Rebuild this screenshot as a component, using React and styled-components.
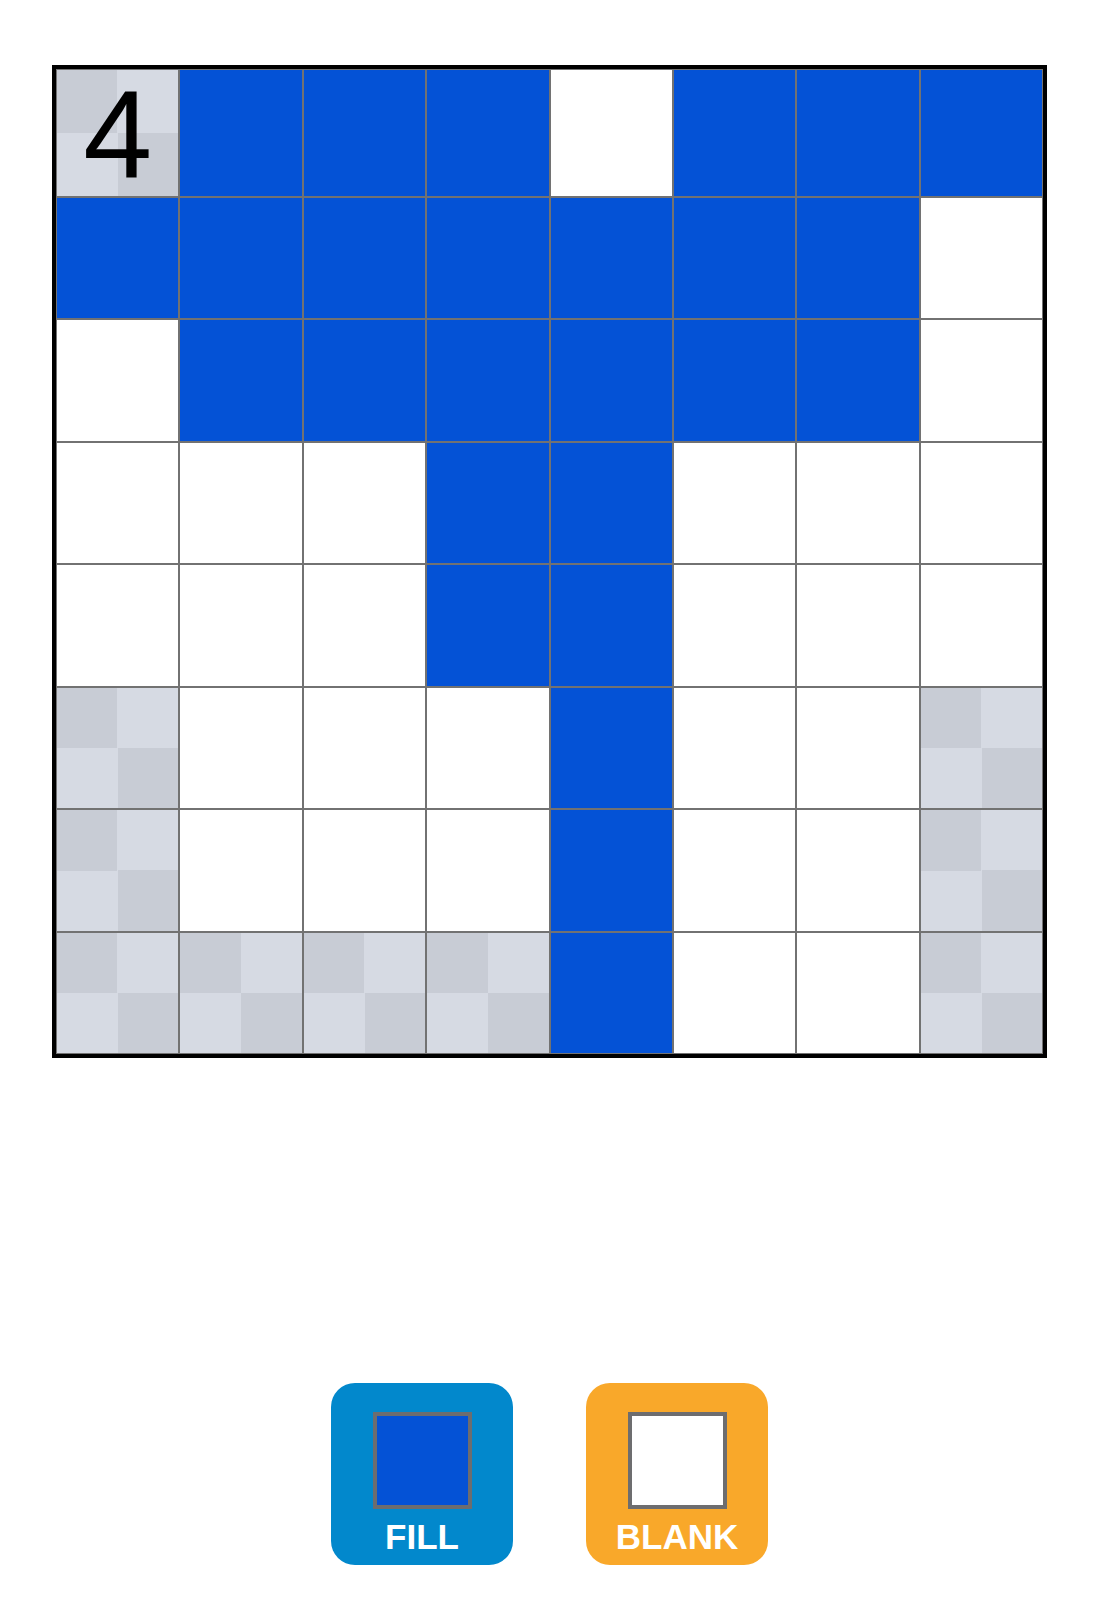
import React from "react";
import styled, { createGlobalStyle } from "styled-components";

const GlobalStyle = createGlobalStyle`
  html, body { margin: 0; padding: 0; background: #ffffff; }
  body { font-family: "Liberation Sans", Arial, sans-serif; }
  * { box-sizing: border-box; }
`;

const Page = styled.main`
  width: 1099px;
  min-height: 1600px;
  display: flex;
  flex-direction: column;
  align-items: center;
  padding-top: 65px;
`;

const Board = styled.div`
  width: 995px;
  height: 993px;
  border: 4px solid #000;
  display: grid;
  grid-template-columns: repeat(8, 1fr);
  grid-template-rows: repeat(8, 1fr);
  background: #fff;
`;

const COLORS = {
  B: "#0452d6",
  W: "#ffffff",
};

const Cell = styled.div`
  border: 1px solid #727272;
  display: flex;
  align-items: center;
  justify-content: center;
  background: ${({ $kind }) =>
    $kind === "C"
      ? "conic-gradient(#d6dae3 0 25%, #c8ccd5 0 50%, #d6dae3 0 75%, #c8ccd5 0)"
      : COLORS[$kind]};
`;

const Clue = styled.span`
  font-family: "Liberation Sans", Arial, sans-serif;
  font-size: 124px;
  line-height: 1;
  color: #000;
  margin-top: 2px;
`;

const Toolbar = styled.div`
  margin-top: 325px;
  display: flex;
  gap: 73px;
`;

const ToolButton = styled.button`
  width: 182px;
  height: 182px;
  border: none;
  border-radius: 24px;
  background: ${({ $variant }) => ($variant === "fill" ? "#0288cc" : "#f9a82a")};
  display: flex;
  flex-direction: column;
  align-items: center;
  padding: 29px 0 0;
  cursor: pointer;
`;

const Swatch = styled.span`
  width: 99px;
  height: 97px;
  border: 4px solid #6d6d6f;
  background: ${({ $variant }) => ($variant === "fill" ? "#0452d6" : "#ffffff")};
`;

const Label = styled.span`
  margin-top: 10px;
  font-family: "Liberation Sans", Arial, sans-serif;
  font-weight: 700;
  font-size: 35px;
  line-height: 1;
  color: #ffffff;
`;

const LAYOUT = [
  "CBBBWBBB",
  "BBBBBBBW",
  "WBBBBBBW",
  "WWWBBWWW",
  "WWWBBWWW",
  "CWWWBWWC",
  "CWWWBWWC",
  "CCCCBWWC",
];

export default function App() {
  return (
    <>
      <GlobalStyle />
      <Page>
        <Board>
          {LAYOUT.map((row, r) =>
            row.split("").map((kind, c) => (
              <Cell key={`${r}-${c}`} $kind={kind}>
                {r === 0 && c === 0 && <Clue>4</Clue>}
              </Cell>
            ))
          )}
        </Board>
        <Toolbar>
          <ToolButton $variant="fill">
            <Swatch $variant="fill" />
            <Label>FILL</Label>
          </ToolButton>
          <ToolButton $variant="blank">
            <Swatch $variant="blank" />
            <Label>BLANK</Label>
          </ToolButton>
        </Toolbar>
      </Page>
    </>
  );
}
